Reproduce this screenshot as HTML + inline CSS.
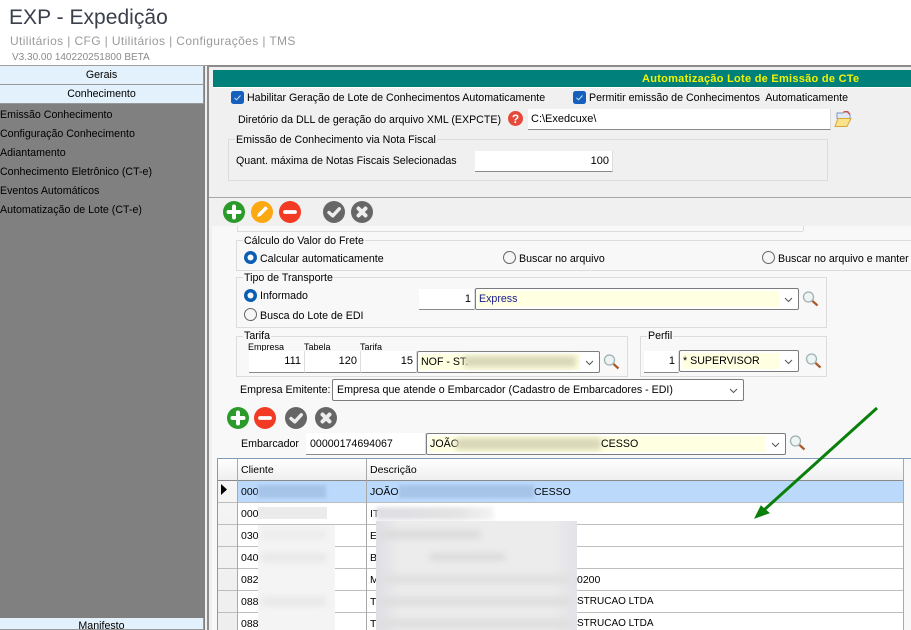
<!DOCTYPE html>
<html lang="pt"><head><meta charset="utf-8"><title>EXP - Expedição</title>
<style>
html,body{margin:0;padding:0;background:#fff}
#p{position:relative;width:911px;height:630px;overflow:hidden;background:#fff;font:10.65px "Liberation Sans",sans-serif;color:#000}
#p div,#p svg{position:absolute}
.t{white-space:nowrap;line-height:14px;height:14px;margin-top:1px}
.in{background:#fff;border-bottom:1px solid #8a8a8a;border-right:1px solid #ddd;box-sizing:border-box;line-height:21px;white-space:nowrap;padding:0 3px;font-size:11px}
.r{text-align:right}
.cb{background:#fff;border:1px solid #7c7c7c;border-radius:2px;box-sizing:border-box}
.y{background:#ffffe1;top:2px;bottom:2px;left:2px;line-height:16px;white-space:nowrap;padding-left:1px;overflow:hidden}
.ch{width:9px;height:9px;right:5px;top:4px}
.g{border:1px solid #dcdcdc;box-sizing:border-box}
.gl{background:inherit;padding:0 1px;white-space:nowrap;line-height:13px}
.nav{left:0;width:204px;background:#e3f1fc;border-right:1px solid #999;border-bottom:1px solid #999;box-sizing:border-box;text-align:center;line-height:19px;height:19px}
.menu{left:0;white-space:nowrap;line-height:14px;color:#000;margin-top:1px}
.cell{white-space:nowrap;line-height:14px;font-size:10.5px}
.hl{top:459px;width:1px;height:171px;background:#a9a9a9}
.ic{width:22px;height:22px}
.mag{width:17px;height:16px}
</style></head><body><div id="p">
<svg width="0" height="0" style="position:absolute"><defs>
<symbol id="plus" viewBox="0 0 22 22"><circle cx="11" cy="11" r="11" fill="#2a9a2a"/><path d="M11 5.500v11M5.500 11h11" stroke="#fff" stroke-width="4" stroke-linecap="round"/></symbol>
<symbol id="edit" viewBox="0 0 22 22"><circle cx="11" cy="11" r="11" fill="#fca811"/><path d="M6 16l1-3.500 7.500-7.500 2.500 2.500-7.500 7.500z" fill="#fff"/></symbol>
<symbol id="minus" viewBox="0 0 22 22"><circle cx="11" cy="11" r="11" fill="#f33a24"/><path d="M6 11h10" stroke="#fff" stroke-width="3.800" stroke-linecap="round"/></symbol>
<symbol id="ok" viewBox="0 0 22 22"><circle cx="11" cy="11" r="11" fill="#666"/><path d="M6 11.500l3.800 3.300 6.500-7" fill="none" stroke="#eee" stroke-width="3.400" stroke-linecap="round" stroke-linejoin="round"/></symbol>
<symbol id="no" viewBox="0 0 22 22"><circle cx="11" cy="11" r="11" fill="#666"/><path d="M7.500 7.500l7 7M14.500 7.500l-7 7" stroke="#eee" stroke-width="4" stroke-linecap="round"/></symbol>
<symbol id="m" viewBox="0 0 17 16"><circle cx="6.500" cy="6" r="5" fill="#eef4f4" stroke="#9fb2b2" stroke-width="1.300"/><path d="M10.500 10l5 4.500" stroke="#a85a2a" stroke-width="2.200"/></symbol>
<symbol id="c" viewBox="0 0 9 9"><path d="M1 3l3.500 3.500L8 3" fill="none" stroke="#555" stroke-width="1"/></symbol>
<symbol id="chk" viewBox="0 0 13 13"><rect width="13" height="13" rx="2.500" fill="#1560bd"/><path d="M3.500 6.800l2 2 4-4.300" fill="none" stroke="#cfe2f7" stroke-width="1"/></symbol>
<symbol id="r1" viewBox="0 0 13 13"><circle cx="6.500" cy="6.500" r="6.500" fill="#0a5fb4"/><circle cx="6.500" cy="6.500" r="3" fill="#fff"/></symbol>
<symbol id="r0" viewBox="0 0 13 13"><circle cx="6.500" cy="6.500" r="6" fill="#f6f6f6" stroke="#666"/></symbol>
</defs></svg>

<div class="t" style="left:9px;top:3px;height:27px;line-height:27px;font-size:21px;letter-spacing:.03px;color:#3a3f4a">EXP - Expedição</div>
<div class="t" style="left:10px;top:33px;font-size:12px;letter-spacing:.38px;color:#9a9a9a">Utilitários | CFG | Utilitários | Configurações | TMS</div>
<div class="t" style="left:12px;top:50px;font-size:10px;color:#8a8a8a">V3.30.00 140220251800 BETA</div>

<div style="left:0;top:65px;width:911px;height:1px;background:#a0a0a0"></div>
<div style="left:0;top:66px;width:205px;height:564px;background:#808080"></div>
<div class="nav" style="top:66px">Gerais</div>
<div class="nav" style="top:85px">Conhecimento</div>
<div class="nav" style="top:618px;height:12px;line-height:17px">Manifesto</div>
<div class="menu" style="top:107px">Emissão Conhecimento</div>
<div class="menu" style="top:126px">Configuração Conhecimento</div>
<div class="menu" style="top:145px">Adiantamento</div>
<div class="menu" style="top:164px">Conhecimento Eletrônico (CT-e)</div>
<div class="menu" style="top:183px">Eventos Automáticos</div>
<div class="menu" style="top:202px">Automatização de Lote (CT-e)</div>

<div style="left:205px;top:66px;width:3px;height:564px;background:#f0f0f0"></div>
<div style="left:208px;top:65px;width:703px;height:2px;background:#8c8c8c"></div>
<div style="left:207px;top:65px;width:2px;height:565px;background:#8c8c8c"></div>
<div style="left:209px;top:67px;width:702px;height:563px;background:#f0f0f0"></div>
<div style="left:213px;top:70px;width:698px;height:17px;background:#00807a"></div>
<div class="t" style="left:642px;top:71px;font-size:11px;font-weight:bold;color:#f4f400;letter-spacing:.27px">Automatização Lote de Emissão de CTe</div>
<div style="left:213px;top:87px;width:698px;height:1px;background:#fff"></div>

<svg style="left:231px;top:91px" width="13" height="13"><use href="#chk"/></svg>
<div class="t" style="left:247px;top:90px">Habilitar Geração de Lote de Conhecimentos Automaticamente</div>
<svg style="left:573px;top:91px" width="13" height="13"><use href="#chk"/></svg>
<div class="t" style="left:589px;top:90px">Permitir emissão de Conhecimentos&nbsp; Automaticamente</div>

<div class="t" style="left:238px;top:112px">Diretório da DLL de geração do arquivo XML (EXPCTE)</div>
<svg style="left:508px;top:111px" width="15" height="15" viewBox="0 0 15 15"><circle cx="7.500" cy="7.500" r="7.500" fill="#e5493a"/><text x="7.500" y="12" text-anchor="middle" font-family="Liberation Sans" font-weight="bold" font-size="12" fill="#fff">?</text></svg>
<div class="in" style="left:528px;top:109px;width:303px;height:21px">C:\Exedcuxe\</div>
<svg style="left:834px;top:111px" width="18" height="17" viewBox="0 0 18 17"><path d="M3 2h6l1-1.500h4l2 3v4H3z" fill="#dfe8f4" stroke="#7d95bd"/><path d="M10 1l3-.5 3 3" fill="none" stroke="#d94a4a" stroke-width="1.400"/><path d="M1 15.500L4 7.500h13l-4 8z" fill="#f9e28a" stroke="#d5a63a"/></svg>

<div class="g" style="left:228px;top:139px;width:600px;height:42px"></div>
<div class="gl t" style="left:235px;top:133px;background:#f0f0f0">Emissão de Conhecimento via Nota Fiscal</div>
<div class="t" style="left:236px;top:153px">Quant. máxima de Notas Fiscais Selecionadas</div>
<div class="in r" style="left:475px;top:151px;width:138px;height:21px">100</div>

<div style="left:209px;top:197px;width:702px;height:1px;background:#a8a8a8"></div>
<svg class="ic" style="left:223px;top:201px"><use href="#plus"/></svg>
<svg class="ic" style="left:251px;top:201px"><use href="#edit"/></svg>
<svg class="ic" style="left:279px;top:201px"><use href="#minus"/></svg>
<svg class="ic" style="left:323px;top:201px"><use href="#ok"/></svg>
<svg class="ic" style="left:351px;top:201px"><use href="#no"/></svg>

<div style="left:212px;top:226px;width:699px;height:404px;background:#f8f8f8"></div>
<div style="left:237px;top:226px;width:1px;height:5px;background:#dcdcdc"></div>
<div style="left:237px;top:231px;width:566px;height:1px;background:#dcdcdc"></div>
<div style="left:803px;top:226px;width:1px;height:5px;background:#dcdcdc"></div>

<div class="g" style="left:236px;top:240px;width:680px;height:31px"></div>
<div class="gl t" style="left:243px;top:234px;background:#f8f8f8">Cálculo do Valor do Frete</div>
<svg style="left:244px;top:251px" width="13" height="13"><use href="#r1"/></svg>
<div class="t" style="left:260px;top:251px">Calcular automaticamente</div>
<svg style="left:503px;top:251px" width="13" height="13"><use href="#r0"/></svg>
<div class="t" style="left:519px;top:251px">Buscar no arquivo</div>
<svg style="left:762px;top:251px" width="13" height="13"><use href="#r0"/></svg>
<div class="t" style="left:778px;top:251px">Buscar no arquivo e manter</div>

<div class="g" style="left:236px;top:277px;width:591px;height:51px"></div>
<div class="gl t" style="left:243px;top:271px;background:#f8f8f8">Tipo de Transporte</div>
<svg style="left:244px;top:289px" width="13" height="13"><use href="#r1"/></svg>
<div class="t" style="left:260px;top:288px">Informado</div>
<svg style="left:244px;top:308px" width="13" height="13"><use href="#r0"/></svg>
<div class="t" style="left:260px;top:308px">Busca do Lote de EDI</div>
<div class="in r" style="left:419px;top:289px;width:56px;height:21px">1</div>
<div class="cb" style="left:475px;top:288px;width:324px;height:22px"><div class="y" style="right:19px;color:#1a1a8a">Express</div><svg class="ch" style="top:6px"><use href="#c"/></svg></div>
<svg class="mag" style="left:802px;top:291px"><use href="#m"/></svg>

<div class="g" style="left:236px;top:336px;width:392px;height:41px"></div>
<div class="gl t" style="left:243px;top:329px;background:#f8f8f8">Tarifa</div>
<div class="t" style="left:248px;top:339px;font-size:9px">Empresa</div>
<div class="t" style="left:304px;top:339px;font-size:9px">Tabela</div>
<div class="t" style="left:360px;top:339px;font-size:9px">Tarifa</div>
<div class="in r" style="left:249px;top:351px;width:56px;height:22px">111</div>
<div class="in r" style="left:305px;top:351px;width:56px;height:22px">120</div>
<div class="in r" style="left:361px;top:351px;width:56px;height:22px">15</div>
<div class="cb" style="left:417px;top:351px;width:183px;height:22px"><div class="y" style="right:19px">NOF - ST.</div><svg class="ch" style="top:6px"><use href="#c"/></svg></div>
<svg class="mag" style="left:603px;top:354px"><use href="#m"/></svg>
<div style="left:464px;top:356px;width:112px;height:11px;background:#d8d8b8;filter:blur(3px)"></div>

<div class="g" style="left:640px;top:336px;width:187px;height:41px"></div>
<div class="gl t" style="left:647px;top:329px;background:#f8f8f8">Perfil</div>
<div class="in r" style="left:644px;top:351px;width:35px;height:22px">1</div>
<div class="cb" style="left:679px;top:350px;width:120px;height:22px"><div class="y" style="right:19px">* SUPERVISOR</div><svg class="ch" style="top:6px"><use href="#c"/></svg></div>
<svg class="mag" style="left:805px;top:353px"><use href="#m"/></svg>

<div class="t" style="left:240px;top:382px">Empresa Emitente:</div>
<div class="cb" style="left:332px;top:379px;width:412px;height:22px;line-height:20px;padding-left:4px;white-space:nowrap">Empresa que atende o Embarcador (Cadastro de Embarcadores - EDI)<svg class="ch" style="top:6px"><use href="#c"/></svg></div>

<svg class="ic" style="left:227px;top:407px"><use href="#plus"/></svg>
<svg class="ic" style="left:254px;top:407px"><use href="#minus"/></svg>
<svg class="ic" style="left:285px;top:407px"><use href="#ok"/></svg>
<svg class="ic" style="left:315px;top:407px"><use href="#no"/></svg>

<div class="t" style="left:241px;top:436px">Embarcador</div>
<div class="in" style="left:306px;top:433px;width:120px;height:22px;line-height:22px;padding-left:4px;font-size:10.65px">00000174694067</div>
<div class="cb" style="left:426px;top:433px;width:360px;height:22px"><div class="y" style="right:19px">JOÃO</div><div style="left:29px;top:4px;width:145px;height:12px;background:#d8d8b8;filter:blur(3px)"></div><div class="t" style="left:174px;top:2px">CESSO</div><svg class="ch" style="top:6px"><use href="#c"/></svg></div>
<svg class="mag" style="left:789px;top:435px"><use href="#m"/></svg>

<!-- grid -->
<div style="left:217px;top:458px;width:694px;height:1px;background:#7f9db9"></div>
<div style="left:217px;top:458px;width:1px;height:172px;background:#7f9db9"></div>
<div style="left:218px;top:459px;width:685px;height:21px;background:linear-gradient(#fff,#efefef)"></div>
<div style="left:218px;top:480px;width:685px;height:1px;background:#8a8a8a"></div>
<div style="left:218px;top:481px;width:19px;height:149px;background:linear-gradient(#f5f5f5,#eee)"></div>
<div style="left:238px;top:481px;width:665px;height:149px;background:#fff"></div>
<div style="left:238px;top:481px;width:665px;height:21px;background:#bbd9fb"></div>
<div style="left:218px;top:502px;width:685px;height:1px;background:#bdbdbd"></div>
<div style="left:218px;top:524px;width:685px;height:1px;background:#bdbdbd"></div>
<div style="left:218px;top:546px;width:685px;height:1px;background:#bdbdbd"></div>
<div style="left:218px;top:568px;width:685px;height:1px;background:#bdbdbd"></div>
<div style="left:218px;top:590px;width:685px;height:1px;background:#bdbdbd"></div>
<div style="left:218px;top:612px;width:685px;height:1px;background:#bdbdbd"></div>
<div class="hl" style="left:237px"></div>
<div class="hl" style="left:366px"></div>
<div class="hl" style="left:903px"></div>
<svg style="left:221px;top:484px" width="6" height="11"><path d="M0 0l6 5.500-6 5.500z" fill="#000"/></svg>
<div class="t cell" style="left:241px;top:462px">Cliente</div>
<div class="t cell" style="left:370px;top:462px">Descrição</div>

<div class="t cell" style="left:241px;top:484px">000</div><div class="t cell" style="left:370px;top:484px">JOÃO</div><div class="t cell" style="left:534px;top:484px">CESSO</div>
<div class="t cell" style="left:241px;top:506px">000</div><div class="t cell" style="left:370px;top:506px">IT</div>
<div class="t cell" style="left:241px;top:528px">030</div><div class="t cell" style="left:370px;top:528px">E</div>
<div class="t cell" style="left:241px;top:550px">040</div><div class="t cell" style="left:370px;top:550px">B</div>
<div class="t cell" style="left:241px;top:572px">082</div><div class="t cell" style="left:370px;top:572px">M</div><div class="t cell" style="left:577px;top:572px">0200</div>
<div class="t cell" style="left:241px;top:594px">088</div><div class="t cell" style="left:370px;top:594px">T</div><div class="t cell" style="left:577px;top:594px;font-size:10px">STRUCAO LTDA</div>
<div class="t cell" style="left:241px;top:616px">088</div><div class="t cell" style="left:370px;top:616px">T</div><div class="t cell" style="left:577px;top:616px;font-size:10px">STRUCAO LTDA</div>

<div style="left:258px;top:485px;width:68px;height:13px;background:#a6c4e8;filter:blur(1.500px)"></div>
<div style="left:399px;top:485px;width:135px;height:13px;background:#a6c4e8;filter:blur(1.500px)"></div>
<div style="left:258px;top:507px;width:69px;height:12px;background:#ebebeb"></div>
<div style="left:376px;top:507px;width:118px;height:13px;background:linear-gradient(90deg,#dedee4,#e4e4e4 70%,#f4f4f4);filter:blur(2px)"></div>
<div style="left:258px;top:525px;width:77px;height:105px;background:#f4f4f4"></div>
<div style="left:262px;top:530px;width:64px;height:9px;background:#ececec;filter:blur(3px)"></div>
<div style="left:262px;top:553px;width:64px;height:9px;background:#e8e8e8;filter:blur(3px)"></div>
<div style="left:262px;top:597px;width:64px;height:9px;background:#e8e8e8;filter:blur(3px)"></div>
<div style="left:376px;top:521px;width:201px;height:109px;background:linear-gradient(90deg,#dfdfe6,#ececec 12%,#ececec 88%,#e2e2e8);filter:none"></div>
<div style="left:380px;top:530px;width:100px;height:9px;background:#dcdcdc;filter:blur(3px)"></div>
<div style="left:430px;top:553px;width:75px;height:8px;background:#dcdcdc;filter:blur(3px)"></div>
<div style="left:380px;top:575px;width:190px;height:9px;background:#e0e0e0;filter:blur(3px)"></div>
<div style="left:380px;top:597px;width:190px;height:9px;background:#dedede;filter:blur(3px)"></div>
<div style="left:380px;top:619px;width:190px;height:9px;background:#dedede;filter:blur(3px)"></div>

<svg style="left:0;top:0" width="911" height="630"><path d="M877 408L764 510" stroke="#0a800a" stroke-width="3"/><path d="M755 518l6-12 8 7z" fill="#0a800a" stroke="#0a800a"/></svg>
</div></body></html>
